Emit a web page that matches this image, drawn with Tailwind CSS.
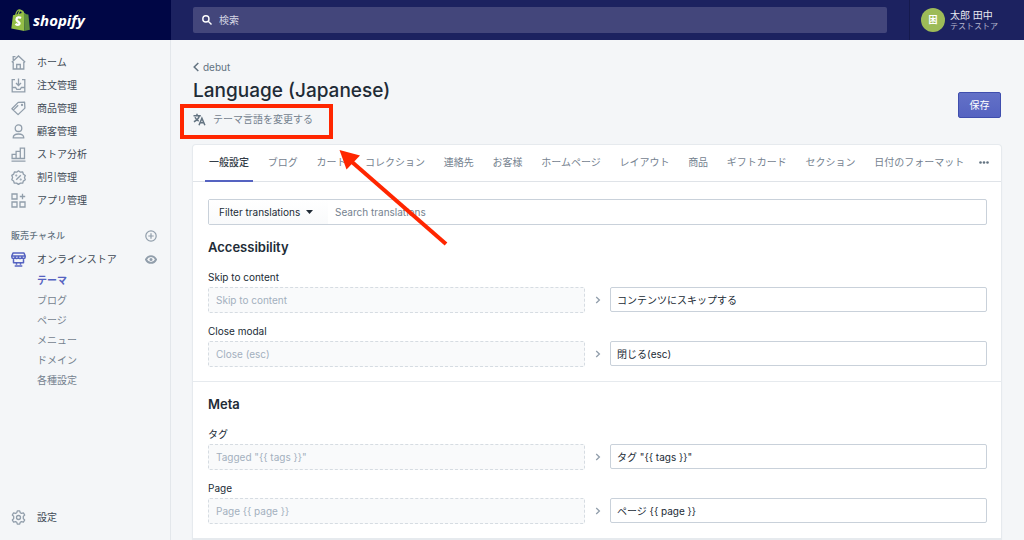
<!DOCTYPE html>
<html lang="ja">
<head>
<meta charset="utf-8">
<meta name="viewport" content="width=device-width, initial-scale=1">
<title>Language (Japanese)</title>
<script src="https://cdn.jsdelivr.net/npm/@tailwindcss/browser@4"></script>
</head>
<body class="flex h-screen flex-col overflow-hidden bg-[#f4f6f8] font-['Inter','Noto_Sans_CJK_JP',sans-serif] text-[10px] text-[#212b36]">

<header class="flex h-10 shrink-0 bg-[#1c2260]">
  <a href="#" class="flex w-[171px] shrink-0 items-center gap-[3px] bg-[#000645] pl-[11px] text-white" aria-label="shopify">
    <svg class="h-[22px] w-[19px]" viewBox="0 0 19 22">
      <path d="M2 6.200 13 3.600 13.400 22 .3 19.400Z" fill="#95bf47"/>
      <path d="M12.800 3.600 15.400 5.200 17.400 5.600 18.900 20.700 13.400 22Z" fill="#5e8e3e"/>
      <path d="M4.700 6.200C5.200 3.200 7 .9 8.700.9c1.800 0 2.600 1.900 2.500 4M7.100 5.500C7.700 3 9.300 1.400 10.500 1.600c1.300.2 2 1.400 2.300 3" fill="none" stroke="#95bf47" stroke-width="1.200"/>
      <path d="M10 9C8.300 7.900 5.600 8.100 5.500 10.500c-.1 2.200 3.200 2.200 3.100 4-.1 2-2.700 1.600-4.100.4" fill="none" stroke="#fff" stroke-width="2.300"/>
    </svg>
    <span class="font-['Open_Sans',sans-serif] text-[15px] leading-5 font-bold italic">shopify</span>
  </a>
  <div class="flex flex-1 items-center pr-[22px] pl-[22px]">
    <label class="flex h-[26px] flex-1 items-center gap-[7px] rounded-[2px] bg-[#43467b] px-[9px] text-white">
      <svg class="size-[10px]" viewBox="0 0 10 10" fill="none" stroke="#fff" stroke-width="1.400"><circle cx="3.900" cy="3.900" r="3.100"/><path d="m6.200 6.200 3.300 3.300"/></svg>
      <input type="search" aria-label="検索" placeholder="検索" class="min-w-0 flex-1 bg-transparent outline-none placeholder:text-[#d5d6e3]">
    </label>
  </div>
  <button class="flex w-[115px] shrink-0 items-center gap-[5px] border-l border-[#151a4e] pl-[11px] text-left">
    <span class="flex size-6 items-center justify-center rounded-full bg-[#9dbb58] text-[9px] font-bold text-white">困</span>
    <span class="flex flex-col">
      <span class="text-[10px] leading-3 text-[#e8e9f0]">太郎 田中</span>
      <span class="text-[8px] leading-[10px] text-[#b3b5cb]">テストストア</span>
    </span>
  </button>
</header>

<div class="flex min-h-0 flex-1">
  <aside class="flex w-[171px] shrink-0 flex-col border-r border-[#e3e7eb] pt-[11px] pb-[11px] pl-[11px] text-[#3f4a56]">
    <nav aria-label="メイン">
      <ul>
        <li><a href="#" class="flex h-[23px] items-center gap-[11px]">
          <svg class="size-[15px]" viewBox="0 0 15 15" fill="none" stroke="#919eab" stroke-width="1.300"><path d="M2.200 7v7h10.600V7M.8 7.200 7.500 1l6.700 6.200M2.200 5V1.600h2.300M5.700 14V9.500h3.600V14"/></svg>ホーム</a></li>
        <li><a href="#" class="flex h-[23px] items-center gap-[11px]">
          <svg class="size-[15px]" viewBox="0 0 15 15" fill="none" stroke="#919eab" stroke-width="1.300"><path d="M4 1.600H1.200v12.200h12.600V1.600H11M1.200 9.500h3.400l1.200 1.800h3.400l1.200-1.800h3.400M7.500.5v6.800M5 5l2.500 2.500L10 5"/></svg>注文管理</a></li>
        <li><a href="#" class="flex h-[23px] items-center gap-[11px]">
          <svg class="size-[15px]" viewBox="0 0 15 15" fill="none" stroke="#919eab" stroke-width="1.300" stroke-linejoin="round"><path d="M.9 7.700 7.200 1.400l6.400-.2.300 5.900-6.800 6.500zM2.300 9.100l4.900-4.900"/><circle cx="11" cy="4" r=".5"/></svg>商品管理</a></li>
        <li><a href="#" class="flex h-[23px] items-center gap-[11px]">
          <svg class="size-[15px]" viewBox="0 0 15 15" fill="none" stroke="#919eab" stroke-width="1.300"><circle cx="7.500" cy="4.200" r="3.300"/><path d="M2.200 13.900c0-2.700 1.700-3.900 5.300-3.900s5.300 1.200 5.300 3.900z" stroke-linejoin="round"/></svg>顧客管理</a></li>
        <li><a href="#" class="flex h-[23px] items-center gap-[11px]">
          <svg class="size-[15px]" viewBox="0 0 15 15" fill="none" stroke="#919eab" stroke-width="1.300"><path d="M1.100 11.500V7.300h4v4.200zM5.100 11.500V4.300h4.200v7.200M9.300 11.500V1.200h4.200v10.300zM.5 14.200h14M5 11.500h4.500"/></svg>ストア分析</a></li>
        <li><a href="#" class="flex h-[23px] items-center gap-[11px]">
          <svg class="size-[15px]" viewBox="0 0 15 15" fill="none" stroke="#919eab" stroke-width="1.300" stroke-linejoin="round"><path d="m7.500.8 1.900 1.400 2.300-.2.700 2.200 1.900 1.300-.8 2.100.8 2.200-2 1.300-.6 2.100-2.300-.1-1.900 1.300-1.900-1.300-2.300.1-.7-2.200L.8 9.700l.8-2.200-.8-2.100 1.900-1.300.7-2.100 2.300.2z"/><path d="m5.200 9.800 4.600-4.600"/><circle cx="5.300" cy="5.500" r=".4"/><circle cx="9.700" cy="9.500" r=".4"/></svg>割引管理</a></li>
        <li><a href="#" class="flex h-[23px] items-center gap-[11px]">
          <svg class="size-[15px]" viewBox="0 0 15 15" fill="none" stroke="#919eab" stroke-width="1.300"><path d="M1 1h5v5H1zM1 9h5v5H1zM9 9h5v5H9zM11.500.8v5.400M8.800 3.500h5.400"/></svg>アプリ管理</a></li>
      </ul>
    </nav>
    <div class="mt-3 flex h-6 items-center justify-between pr-[13px]">
      <h2 class="text-[9px] font-medium text-[#637381]">販売チャネル</h2>
      <button aria-label="チャネルを追加"><svg class="size-3" viewBox="0 0 12 12" fill="none" stroke="#919eab" stroke-width="1.200"><circle cx="6" cy="6" r="5.200"/><path d="M6 3.300v5.400M3.300 6h5.400"/></svg></button>
    </div>
    <nav aria-label="販売チャネル">
      <div class="flex h-[22px] items-center justify-between pr-[13px]">
        <a href="#" class="flex items-center gap-[11px]">
          <svg class="size-[15px]" viewBox="0 0 15 15" fill="none" stroke="#5563c1" stroke-width="1.500" stroke-linejoin="round"><path d="M2 .9h11l1.200 3.200v1c0 2-3.300 2-3.300 0 0 2-3.400 2-3.400 0 0 2-3.400 2-3.400 0 0 2-3.300 2-3.300 0v-1zM1 4h13M2.500 6.800v4h10v-4M5.500 10.800v2M9.500 10.800v2M3.700 14.100h7.600"/></svg>オンラインストア</a>
        <button aria-label="ストアを表示"><svg class="h-[9px] w-3" viewBox="0 0 12 9" fill="none" stroke="#919eab"><path d="M.9 4.500C2 2.300 3.700 1.100 6 1.100s4 1.200 5.100 3.400C10 6.700 8.300 7.900 6 7.900S2 6.700.9 4.500Z" stroke-width="1.800"/><circle cx="6" cy="4.500" r="1.500" fill="#919eab" stroke="none"/></svg></button>
      </div>
      <ul class="pl-[26px] text-[#75828f]">
        <li><a href="#" aria-current="page" class="flex h-5 items-center font-bold text-[#5563c1]">テーマ</a></li>
        <li><a href="#" class="flex h-5 items-center">ブログ</a></li>
        <li><a href="#" class="flex h-5 items-center">ページ</a></li>
        <li><a href="#" class="flex h-5 items-center">メニュー</a></li>
        <li><a href="#" class="flex h-5 items-center">ドメイン</a></li>
        <li><a href="#" class="flex h-5 items-center">各種設定</a></li>
      </ul>
    </nav>
    <a href="#" class="mt-auto flex h-[23px] items-center gap-[11px]">
      <svg class="size-[15px]" viewBox="0 0 15 15" fill="none" stroke="#919eab" stroke-width="1.300" stroke-linejoin="round"><path d="M6.300.8h2.400l.5 1.900 1.300.7 1.900-.5 1.300 2.100-1.400 1.400v2.200l1.400 1.400-1.300 2.100-1.900-.5-1.300.7-.5 1.900H6.300l-.5-1.900-1.300-.7-1.900.5L1.300 10l1.400-1.400V6.400L1.300 5l1.300-2.100 1.900.5 1.300-.7z"/><circle cx="7.500" cy="7.500" r="2"/></svg>設定</a>
  </aside>

  <main class="min-w-0 flex-1 pt-5 pr-[23px] pl-[22px]">
    <div class="relative flex items-end justify-between">
      <div class="pb-px">
        <a href="#" class="flex h-[14px] items-center gap-1 text-[#637381]"><svg class="h-[10px] w-[6px]" viewBox="0 0 6 10" fill="none" stroke="#637381" stroke-width="1.500"><path d="M5.300 1 1.200 5l4.100 4"/></svg>debut</a>
        <h1 class="mt-1 text-[19px] leading-[26px] font-medium">Language (Japanese)</h1>
        <button class="mt-[7px] flex h-4 items-center gap-[7px] text-[#75828f]">
          <svg class="size-[13px]" viewBox="0 0 13 13" fill="none" stroke="#637381" stroke-width="1.500"><path d="M.5 2.800h7.300M4 .8v2M6.300 3C5.600 5.500 3.500 7.500.9 8.700M2 4.300c.8 1.800 2.200 3.100 3.700 3.900M6 12.200l2.900-7 3 7M7 9.800h4"/></svg>テーマ言語を変更する</button>
      </div>
      <button class="mb-[10px] h-[26px] w-[43px] rounded-[2px] border border-[#3f4eae] bg-linear-to-b from-[#6371c7] to-[#5563c1] text-[10px] text-white">保存</button>
      <div class="pointer-events-none absolute top-11 -left-[13px] h-[35px] w-[153px] border-4 border-[#ff2600]"></div>
      <svg class="pointer-events-none absolute top-[89px] left-[145px] z-10 h-[98px] w-[112px]" viewBox="0 0 112 98"><path d="M14 13 108 95" stroke="#ff2600" stroke-width="4"/><path d="M1.500 1 22 6.500 8.500 20.500Z" fill="#ff2600"/></svg>
    </div>

    <section class="mt-[17px] rounded-t-[3px] bg-white shadow-[0_0_0_1px_#e6eaee,0_1px_2px_#d5dbe1]">
      <div role="tablist" class="flex h-[37px] items-stretch justify-between border-b border-[#dfe3e8] pr-2 pl-3 whitespace-nowrap text-[#75828f]">
        <button role="tab" aria-selected="true" class="-mb-px border-b-2 border-[#5563c1] px-1 font-medium text-[#333d48]">一般設定</button>
        <button role="tab" class="px-1 pb-[2px]">ブログ</button>
        <button role="tab" class="px-1 pb-[2px]">カート</button>
        <button role="tab" class="px-1 pb-[2px]">コレクション</button>
        <button role="tab" class="px-1 pb-[2px]">連絡先</button>
        <button role="tab" class="px-1 pb-[2px]">お客様</button>
        <button role="tab" class="px-1 pb-[2px]">ホームページ</button>
        <button role="tab" class="px-1 pb-[2px]">レイアウト</button>
        <button role="tab" class="px-1 pb-[2px]">商品</button>
        <button role="tab" class="px-1 pb-[2px]">ギフトカード</button>
        <button role="tab" class="px-1 pb-[2px]">セクション</button>
        <button role="tab" class="px-1 pb-[2px]">日付のフォーマット</button>
        <button aria-label="その他" class="pr-1 pb-[2px]"><svg class="h-[3px] w-[10px]" viewBox="0 0 10 3" fill="#637381"><circle cx="1.500" cy="1.500" r="1.300"/><circle cx="5" cy="1.500" r="1.300"/><circle cx="8.500" cy="1.500" r="1.300"/></svg></button>
      </div>

      <div class="border-b border-[#e6eaee] pt-[17px] pr-[14px] pb-[14px] pl-[15px]">
        <div class="flex h-[26px] rounded-[2px] border border-[#c9d1da]">
          <button class="flex w-[119px] shrink-0 items-center gap-[6px] bg-linear-to-b from-white to-[#f9fafb] pl-[10px]">Filter translations<svg class="h-1 w-[7px]" viewBox="0 0 7 4"><path d="M0 0h7L3.500 4z" fill="#212b36"/></svg></button>
          <input type="search" aria-label="Search translations" placeholder="Search translations" class="min-w-0 flex-1 bg-transparent px-[7px] outline-none placeholder:text-[#75828f]">
        </div>
        <h2 class="mt-3 text-[13px] leading-5 font-semibold">Accessibility</h2>
        <label for="skip" class="mt-[13px] block h-[15px] leading-[14px]">Skip to content</label>
        <div class="mt-[2px] grid grid-cols-[1fr_25px_1fr] items-center">
          <input disabled aria-label="Skip to content (original)" value="Skip to content" class="h-[26px] min-w-0 rounded-[2px] border border-dashed border-[#d6dce2] bg-[#f9fafb] px-[7px] text-[#a3b0be]">
          <svg class="h-2 w-[6px] justify-self-center" viewBox="0 0 6 8" fill="none" stroke="#919eab" stroke-width="1.300"><path d="m1.200 1 3.200 3-3.200 3"/></svg>
          <input id="skip" value="コンテンツにスキップする" class="h-[25px] min-w-0 self-start rounded-[2px] border border-[#c9d1da] px-[6px]">
        </div>
        <label for="close" class="mt-[11px] block h-[15px] leading-[14px]">Close modal</label>
        <div class="mt-[2px] grid grid-cols-[1fr_25px_1fr] items-center">
          <input disabled aria-label="Close modal (original)" value="Close (esc)" class="h-[26px] min-w-0 rounded-[2px] border border-dashed border-[#d6dce2] bg-[#f9fafb] px-[7px] text-[#a3b0be]">
          <svg class="h-2 w-[6px] justify-self-center" viewBox="0 0 6 8" fill="none" stroke="#919eab" stroke-width="1.300"><path d="m1.200 1 3.200 3-3.200 3"/></svg>
          <input id="close" value="閉じる(esc)" class="h-[25px] min-w-0 self-start rounded-[2px] border border-[#c9d1da] px-[6px]">
        </div>
      </div>

      <div class="border-b border-[#e6eaee] pt-3 pr-[14px] pb-[14px] pl-[15px]">
        <h2 class="text-[13px] leading-5 font-semibold">Meta</h2>
        <label for="tags" class="mt-[13px] block h-[15px] leading-[14px]">タグ</label>
        <div class="mt-[2px] grid grid-cols-[1fr_25px_1fr] items-center">
          <input disabled aria-label="タグ (original)" value='Tagged "{{ tags }}"' class="h-[26px] min-w-0 rounded-[2px] border border-dashed border-[#d6dce2] bg-[#f9fafb] px-[7px] text-[#a3b0be]">
          <svg class="h-2 w-[6px] justify-self-center" viewBox="0 0 6 8" fill="none" stroke="#919eab" stroke-width="1.300"><path d="m1.200 1 3.200 3-3.200 3"/></svg>
          <input id="tags" value='タグ "{{ tags }}"' class="h-[25px] min-w-0 self-start rounded-[2px] border border-[#c9d1da] px-[6px]">
        </div>
        <label for="page" class="mt-[11px] block h-[15px] leading-[14px]">Page</label>
        <div class="mt-[2px] grid grid-cols-[1fr_25px_1fr] items-center">
          <input disabled aria-label="Page (original)" value="Page {{ page }}" class="h-[26px] min-w-0 rounded-[2px] border border-dashed border-[#d6dce2] bg-[#f9fafb] px-[7px] text-[#a3b0be]">
          <svg class="h-2 w-[6px] justify-self-center" viewBox="0 0 6 8" fill="none" stroke="#919eab" stroke-width="1.300"><path d="m1.200 1 3.200 3-3.200 3"/></svg>
          <input id="page" value="ページ {{ page }}" class="h-[25px] min-w-0 self-start rounded-[2px] border border-[#c9d1da] px-[6px]">
        </div>
      </div>
    </section>
  </main>
</div>
</body>
</html>
